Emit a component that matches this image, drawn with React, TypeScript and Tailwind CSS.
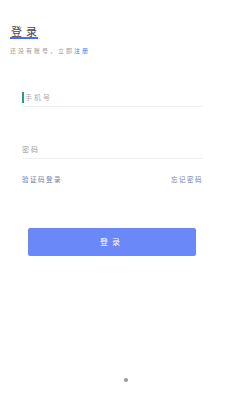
export default function App() {
  return (
    <div className="w-[225px] h-[400px] bg-white font-['Noto_Sans_CJK_SC',sans-serif] flex flex-col">
      <div className="pt-[17px] px-[10px]">
        <div className="inline-flex flex-col">
          <span className="text-[11px] leading-[12px] text-[#444] tracking-[4px] pl-[1px]">登录</span>
          <span className="h-[2px] w-[28px] bg-[#4a6cf0]" />
        </div>
        <p className="mt-[6px] text-[6px] leading-[8px] tracking-[2px] text-[#999]">
          还没有账号，立即<span className="text-[#4a7af5]">注册</span>
        </p>
      </div>

      <div className="px-[22px] mt-[34px]">
        <div className="h-[18px] flex items-center border-b border-[#f0f0f0]">
          <span className="w-[2px] h-[11px] bg-[#2a9a8a] mr-[1px]" />
          <span className="text-[7px] tracking-[2px] text-[#aaa]">手机号</span>
        </div>
        <div className="h-[18px] mt-[34px] flex items-center border-b border-[#f0f0f0]">
          <span className="text-[7px] tracking-[2px] text-[#999]">密码</span>
        </div>
        <div className="mt-[16px] flex justify-between text-[6.5px] tracking-[1.5px] text-[#7080a8]">
          <span>验证码登录</span>
          <span>忘记密码</span>
        </div>
      </div>

      <div className="px-[28px] mt-[43px]">
        <button className="w-[168px] h-[28px] rounded-[2px] bg-[#6a88f8] text-white text-[8px] tracking-[4px] flex items-center justify-center">
          登录
        </button>
      </div>

      <div className="flex-1" />
      <div className="flex justify-center pb-[18px] pl-[27px]">
        <span className="w-[4px] h-[4px] rounded-full bg-[#999]" />
      </div>
    </div>
  )
}
